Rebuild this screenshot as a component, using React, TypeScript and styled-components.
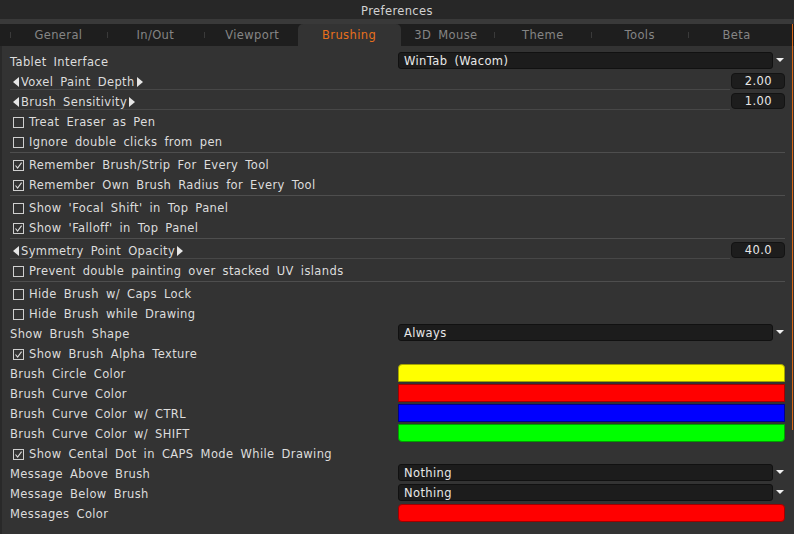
import React from 'react';
import styled, { createGlobalStyle, css } from 'styled-components';

const Global = createGlobalStyle`
  html, body { margin: 0; padding: 0; background: #333333; }
  #root { width: 794px; height: 534px; }
`;

const Window = styled.div`
  position: relative;
  width: 794px;
  height: 534px;
  overflow: hidden;
  background: #333333;
  display: flex;
  flex-direction: column;
  font-family: "DejaVu Sans", Verdana, sans-serif;
  font-size: 11.5px;
  letter-spacing: 0.38px;
  word-spacing: 3px;
  color: #dddddd;
`;

const TitleBar = styled.div`
  flex: none;
  box-sizing: border-box;
  height: 19px;
  padding-top: 1px;
  line-height: 20px;
  background: #272727;
  color: #d2d2d2;
  text-align: center;
`;

const TabStrip = styled.div`
  flex: none;
  box-sizing: border-box;
  height: 27px;
  border-top: 5px solid #393939;
  background: #1e1e1e;
  display: grid;
  grid-template-columns: repeat(8, 1fr);
  padding: 0 9px 0 10px;
`;

const Tab = styled.div<{ $active?: boolean; $afterActive?: boolean }>`
  position: relative;
  box-sizing: border-box;
  height: 22px;
  padding-top: 1px;
  line-height: 21px;
  text-align: center;
  color: #858585;
  white-space: nowrap;
  &::before {
    content: '';
    position: absolute;
    left: 0;
    top: 8px;
    width: 1px;
    height: 6px;
    background: #3a3a3a;
    display: ${(p) => (p.$active || p.$afterActive ? 'none' : 'block')};
  }
  ${(p) =>
    p.$active &&
    css`
      margin: 0 -3px;
      background: #333333;
      border-radius: 5px 5px 0 0;
      color: #e8701c;
      z-index: 1;
    `}
`;

const Content = styled.div`
  flex: 1;
  padding: 4px 9px 0 10px;
  box-shadow: inset 2px 0 0 #292929;
  display: flex;
  flex-direction: column;
`;

const Row = styled.div`
  display: flex;
  align-items: flex-start;
  height: 20px;
  flex: none;
`;

const Label = styled.div`
  flex: 1;
  box-sizing: border-box;
  height: 20px;
  padding-top: 2px;
  line-height: 20px;
  white-space: nowrap;
`;

const SliderLabel = styled.div`
  flex: 1;
  box-sizing: border-box;
  height: 20px;
  display: flex;
  align-items: center;
  padding: 5px 0 0 3px;
  border-bottom: 1px solid #474747;
  white-space: nowrap;
`;

const Tri = styled.svg`
  flex: none;
  display: block;
`;

const SliderText = styled.span`
  margin: 0 2px;
`;

const CheckBox = styled.div`
  flex: none;
  box-sizing: border-box;
  width: 11px;
  height: 11px;
  margin: 7px 5px 0 3px;
  border: 1px solid #cfcfcf;
  display: flex;
  align-items: center;
  justify-content: center;
`;

const Control = styled.div`
  flex: none;
  width: 387px;
  height: 20px;
  display: flex;
  align-items: flex-start;
`;

const Dropdown = styled.div`
  box-sizing: border-box;
  width: 375px;
  height: 17px;
  margin-top: 2px;
  background: #1c1c1c;
  border: 1px solid #111111;
  border-radius: 3px;
  padding-left: 5px;
  line-height: 16px;
  color: #e8e8e8;
  white-space: nowrap;
`;

const DropArrow = styled.div`
  flex: 1;
  display: flex;
  justify-content: center;
  padding: 8px 0 0 1px;
`;

const NumberBox = styled.div`
  box-sizing: border-box;
  flex: none;
  width: 54px;
  height: 16px;
  margin: 3px 0 0 1px;
  background: #1d1d1d;
  border: 1px solid #131313;
  border-radius: 4px;
  text-align: right;
  padding-right: 12px;
  line-height: 15px;
  color: #e8e8e8;
`;

const radii: Record<string, string> = {
  top: '4px 4px 0 0',
  mid: '0',
  bottom: '0 0 4px 4px',
  all: '4px',
};

const Swatch = styled.div<{ $color: string; $edge: string; $shape: string }>`
  box-sizing: border-box;
  width: 387px;
  height: 18px;
  margin-top: 2px;
  background: ${(p) => p.$color};
  border: 1px solid ${(p) => p.$edge};
  border-radius: ${(p) => radii[p.$shape]};
`;

const Separator = styled.div`
  flex: none;
  height: 3px;
  box-sizing: border-box;
  border-bottom: 1px solid #4e4e4e;
`;

const ScrollThumb = styled.div`
  position: absolute;
  right: 1px;
  top: 24px;
  width: 1px;
  height: 406px;
  background: #d9691c;
`;

type RowDef =
  | { kind: 'dropdown'; label: string; value: string }
  | { kind: 'slider'; label: string; value: string }
  | { kind: 'check'; label: string; checked: boolean }
  | { kind: 'sep' }
  | { kind: 'swatch'; label: string; color: string; edge: string; shape: string };

const rows: RowDef[] = [
  { kind: 'dropdown', label: 'Tablet Interface', value: 'WinTab (Wacom)' },
  { kind: 'slider', label: 'Voxel Paint Depth', value: '2.00' },
  { kind: 'slider', label: 'Brush Sensitivity', value: '1.00' },
  { kind: 'check', label: 'Treat Eraser as Pen', checked: false },
  { kind: 'check', label: 'Ignore double clicks from pen', checked: false },
  { kind: 'sep' },
  { kind: 'check', label: 'Remember Brush/Strip For Every Tool', checked: true },
  { kind: 'check', label: 'Remember Own Brush Radius for Every Tool', checked: true },
  { kind: 'sep' },
  { kind: 'check', label: "Show 'Focal Shift' in Top Panel", checked: false },
  { kind: 'check', label: "Show 'Falloff' in Top Panel", checked: true },
  { kind: 'sep' },
  { kind: 'slider', label: 'Symmetry Point Opacity', value: '40.0' },
  { kind: 'check', label: 'Prevent double painting over stacked UV islands', checked: false },
  { kind: 'sep' },
  { kind: 'check', label: 'Hide Brush w/ Caps Lock', checked: false },
  { kind: 'check', label: 'Hide Brush while Drawing', checked: false },
  { kind: 'dropdown', label: 'Show Brush Shape', value: 'Always' },
  { kind: 'check', label: 'Show Brush Alpha Texture', checked: true },
  { kind: 'swatch', label: 'Brush Circle Color', color: '#ffff00', edge: '#a3a300', shape: 'top' },
  { kind: 'swatch', label: 'Brush Curve Color', color: '#ff0000', edge: '#a00000', shape: 'mid' },
  { kind: 'swatch', label: 'Brush Curve Color w/ CTRL', color: '#0000ff', edge: '#00008a', shape: 'mid' },
  { kind: 'swatch', label: 'Brush Curve Color w/ SHIFT', color: '#00ff00', edge: '#00a000', shape: 'bottom' },
  { kind: 'check', label: 'Show Cental Dot in CAPS Mode While Drawing', checked: true },
  { kind: 'dropdown', label: 'Message Above Brush', value: 'Nothing' },
  { kind: 'dropdown', label: 'Message Below Brush', value: 'Nothing' },
  { kind: 'swatch', label: 'Messages Color', color: '#ff0000', edge: '#a00000', shape: 'all' },
];

const tabs = ['General', 'In/Out', 'Viewport', 'Brushing', '3D Mouse', 'Theme', 'Tools', 'Beta'];
const activeTab = 3;

const LeftTri = () => (
  <Tri width="6" height="10" viewBox="0 0 6 10">
    <polygon points="6,0 6,10 0,5" fill="#e6e6e6" />
  </Tri>
);

const RightTri = () => (
  <Tri width="6" height="10" viewBox="0 0 6 10">
    <polygon points="0,0 0,10 6,5" fill="#e6e6e6" />
  </Tri>
);

const DownTri = () => (
  <Tri width="8" height="4" viewBox="0 0 8 4">
    <polygon points="0,0 8,0 4,4" fill="#f0f0f0" />
  </Tri>
);

const Check = () => (
  <svg width="9" height="9" viewBox="0 0 9 9" style={{ display: 'block' }}>
    <polyline points="1.5,4.5 3.6,7 7.6,1.6" fill="none" stroke="#dcdcdc" strokeWidth="1.1" />
  </svg>
);

const renderRow = (r: RowDef, i: number) => {
  switch (r.kind) {
    case 'sep':
      return <Separator key={i} />;
    case 'dropdown':
      return (
        <Row key={i}>
          <Label>{r.label}</Label>
          <Control>
            <Dropdown>{r.value}</Dropdown>
            <DropArrow>
              <DownTri />
            </DropArrow>
          </Control>
        </Row>
      );
    case 'slider':
      return (
        <Row key={i}>
          <SliderLabel>
            <LeftTri />
            <SliderText>{r.label}</SliderText>
            <RightTri />
          </SliderLabel>
          <NumberBox>{r.value}</NumberBox>
        </Row>
      );
    case 'check':
      return (
        <Row key={i}>
          <CheckBox>{r.checked && <Check />}</CheckBox>
          <Label>{r.label}</Label>
        </Row>
      );
    case 'swatch':
      return (
        <Row key={i}>
          <Label>{r.label}</Label>
          <Control>
            <Swatch $color={r.color} $edge={r.edge} $shape={r.shape} />
          </Control>
        </Row>
      );
  }
};

export default function App() {
  return (
    <>
      <Global />
      <Window>
        <TitleBar>Preferences</TitleBar>
        <TabStrip>
          {tabs.map((t, i) => (
            <Tab key={t} $active={i === activeTab} $afterActive={i === activeTab + 1}>
              {t}
            </Tab>
          ))}
        </TabStrip>
        <Content>{rows.map(renderRow)}</Content>
        <ScrollThumb />
      </Window>
    </>
  );
}
